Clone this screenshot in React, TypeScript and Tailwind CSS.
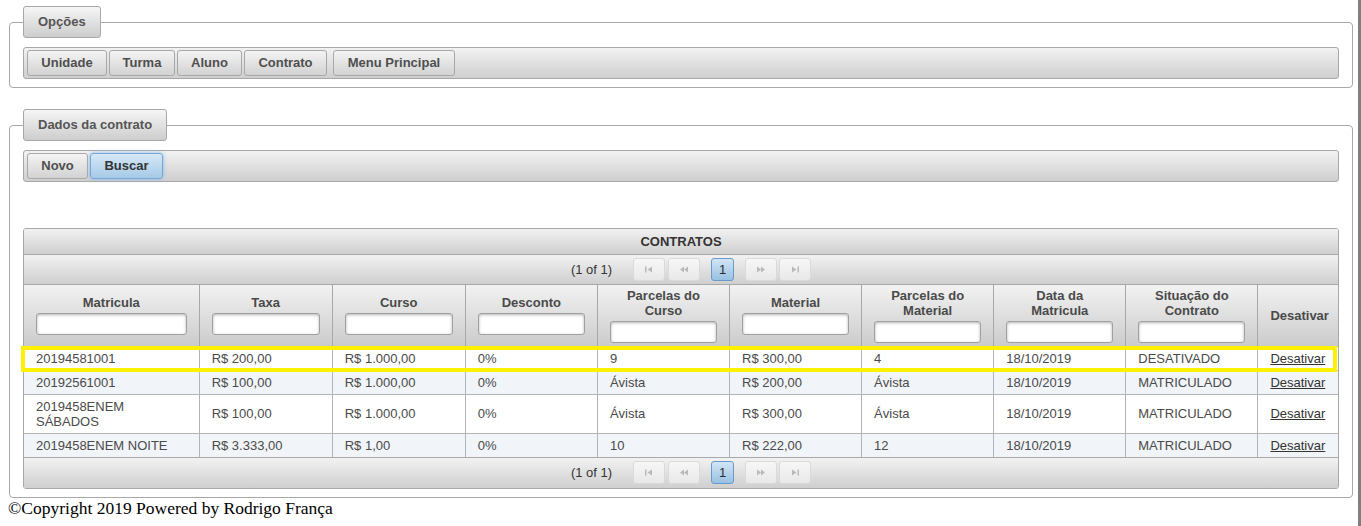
import type { ReactNode } from "react";

type Col = { label: string[]; w: number; filter: boolean };

const cols: Col[] = [
  { label: ["Matricula"], w: 175, filter: true },
  { label: ["Taxa"], w: 133, filter: true },
  { label: ["Curso"], w: 133, filter: true },
  { label: ["Desconto"], w: 132, filter: true },
  { label: ["Parcelas do", "Curso"], w: 132, filter: true },
  { label: ["Material"], w: 132, filter: true },
  { label: ["Parcelas do", "Material"], w: 132, filter: true },
  { label: ["Data da", "Matricula"], w: 132, filter: true },
  { label: ["Situação do", "Contrato"], w: 132, filter: true },
  { label: ["Desativar"], w: 80, filter: false },
];

const rows: string[][] = [
  ["20194581001", "R$ 200,00", "R$ 1.000,00", "0%", "9", "R$ 300,00", "4", "18/10/2019", "DESATIVADO"],
  ["20192561001", "R$ 100,00", "R$ 1.000,00", "0%", "Ávista", "R$ 200,00", "Ávista", "18/10/2019", "MATRICULADO"],
  ["2019458ENEM SÁBADOS", "R$ 100,00", "R$ 1.000,00", "0%", "Ávista", "R$ 300,00", "Ávista", "18/10/2019", "MATRICULADO"],
  ["2019458ENEM NOITE", "R$ 3.333,00", "R$ 1,00", "0%", "10", "R$ 222,00", "12", "18/10/2019", "MATRICULADO"],
];

function Btn({ children, className = "", active = false }: { children: ReactNode; className?: string; active?: boolean }) {
  return (
    <button
      type="button"
      className={
        active
          ? `h-[26px] rounded-[3px] border border-[#74a8dc] bg-linear-to-b from-[#d6e8f6] to-[#a6c9e7] text-[13px] font-bold text-[#333] shadow-[0_0_4px_#8bb6e2] ${className}`
          : `h-[26px] rounded-[3px] border border-[#a8a8a8] bg-linear-to-b from-[#f4f4f4] to-[#d2d2d2] text-[13px] font-bold text-[#4f4f4f] ${className}`
      }
    >
      {children}
    </button>
  );
}

function Toolbar({ children }: { children: ReactNode }) {
  return (
    <div className="flex h-[32px] items-center gap-[2px] rounded-[3px] border border-[#a8a8a8] bg-linear-to-b from-[#f2f2f2] to-[#cfcfcf] px-[3px]">
      {children}
    </div>
  );
}

function Panel({ title, children, className = "" }: { title: string; children: ReactNode; className?: string }) {
  return (
    <fieldset className={`rounded-[4px] border border-[#a8a8a8] px-[13px] pb-[8px] ${className}`}>
      <legend>
        <div className="flex h-[32px] items-center rounded-[3px] border border-[#a8a8a8] bg-linear-to-b from-[#f6f6f6] to-[#cdcdcd] px-[14px] text-[13px] font-bold text-[#555]">
          {title}
        </div>
      </legend>
      <div className="mt-[9px]">{children}</div>
    </fieldset>
  );
}

function PageIcon({ kind }: { kind: "first" | "prev" | "next" | "last" }) {
  const flip = kind === "next" || kind === "last";
  return (
    <svg width="10" height="7" viewBox="0 0 10 7" className={flip ? "-scale-x-100" : ""} fill="#b9b9b9">
      {kind === "first" || kind === "last" ? (
        <>
          <rect x="1" y="0.5" width="1.5" height="6" />
          <path d="M3.5 3.5 L8 0.5 V6.5 Z" />
        </>
      ) : (
        <>
          <path d="M1 3.5 L5 0.5 V6.5 Z" />
          <path d="M5 3.5 L9 0.5 V6.5 Z" />
        </>
      )}
    </svg>
  );
}

function Paginator({ className = "" }: { className?: string }) {
  const dis =
    "flex h-[23px] w-[32px] items-center justify-center rounded-[3px] border border-[#dadada] bg-linear-to-b from-[#f7f7f7] to-[#e8e8e8]";
  return (
    <div className={`flex items-center justify-center bg-linear-to-b from-[#f2f2f2] to-[#cfcfcf] pl-[20px] ${className}`}>
      <span className="mr-[21px] text-[13px] text-[#333]">(1 of 1)</span>
      <span className={dis}>
        <PageIcon kind="first" />
      </span>
      <span className={`${dis} ml-[3px]`}>
        <PageIcon kind="prev" />
      </span>
      <span className="ml-[11px] flex h-[23px] w-[23px] items-center justify-center rounded-[3px] border border-[#6a9ac6] bg-linear-to-b from-[#d2e5f5] to-[#98c1e3] text-[13px] text-[#2c2c2c]">
        1
      </span>
      <span className={`${dis} ml-[11px]`}>
        <PageIcon kind="next" />
      </span>
      <span className={`${dis} ml-[2px]`}>
        <PageIcon kind="last" />
      </span>
    </div>
  );
}

function ContratosTable() {
  return (
    <div className="relative mt-[46px]">
      <div className="overflow-hidden rounded-[3px] border border-[#a8a8a8]">
        <div className="flex h-[26px] items-center justify-center border-b border-[#a8a8a8] bg-linear-to-b from-[#f2f2f2] to-[#cfcfcf] text-[13px] font-bold text-[#333]">
          CONTRATOS
        </div>
        <Paginator className="h-[30px] border-b border-[#a8a8a8]" />
        <table className="w-full table-fixed border-collapse text-[13px] leading-[15px]">
          <colgroup>
            {cols.map((c, i) => (
              <col key={i} style={{ width: c.w }} />
            ))}
          </colgroup>
          <thead>
            <tr>
              {cols.map((c, i) => (
                <th
                  key={i}
                  className={`h-[61px] border-b border-[#a8a8a8] bg-linear-to-b from-[#f2f2f2] to-[#cbcbcb] px-[12px] align-middle font-bold text-[#4a4a4a] ${
                    i > 0 ? "border-l" : ""
                  }`}
                >
                  {c.label.map((l, j) => (
                    <div key={j}>{l}</div>
                  ))}
                  {c.filter ? (
                    <input
                      type="text"
                      className="mt-[3px] block h-[22px] w-full rounded-[3px] border border-[#a0a0a0] bg-white shadow-[inset_0_1px_3px_rgba(0,0,0,0.3)]"
                    />
                  ) : null}
                </th>
              ))}
            </tr>
          </thead>
          <tbody>
            {rows.map((r, ri) => (
              <tr key={ri} className={ri % 2 === 1 ? "bg-[#f1f4f8]" : "bg-white"}>
                {r.map((v, ci) => (
                  <td
                    key={ci}
                    className={`border-t border-[#b4b4b4] px-[12px] py-[4px] align-middle text-[#4a4a4a] ${ci > 0 ? "border-l" : ""}`}
                  >
                    {v}
                  </td>
                ))}
                <td className="border-t border-l border-[#b4b4b4] px-[12px] py-[4px] align-middle">
                  <a href="#" className="text-[#333] underline">
                    Desativar
                  </a>
                </td>
              </tr>
            ))}
          </tbody>
        </table>
        <Paginator className="h-[31px] border-t border-[#a8a8a8]" />
      </div>
      <div className="pointer-events-none absolute top-[118px] left-[-2px] h-[26px] w-[1316px] border-4 border-[#fff200]" />
    </div>
  );
}

export default function App() {
  return (
    <div className="flex min-h-[526px] bg-white font-['Liberation_Sans',Arial,sans-serif]">
      <div className="flex-1">
        <div className="mr-[5px] ml-[9px] pt-[6px]">
          <Panel title="Opções">
            <Toolbar>
              <Btn className="w-[80px]">Unidade</Btn>
              <Btn className="w-[66px]">Turma</Btn>
              <Btn className="w-[65px]">Aluno</Btn>
              <Btn className="w-[83px]">Contrato</Btn>
              <Btn className="ml-[4px] w-[122px]">Menu Principal</Btn>
            </Toolbar>
          </Panel>
          <Panel title="Dados da contrato" className="mt-[21px]">
            <Toolbar>
              <Btn className="w-[61px]">Novo</Btn>
              <Btn className="w-[73px]" active>
                Buscar
              </Btn>
            </Toolbar>
            <ContratosTable />
          </Panel>
        </div>
        <p className="pl-[8px] font-['Liberation_Serif','Times_New_Roman',serif] text-[17.5px] leading-[20px] text-black">
          ©Copyright 2019 Powered by Rodrigo França
        </p>
      </div>
      <div className="w-[3px] bg-[#7f7f7f]" />
    </div>
  );
}
